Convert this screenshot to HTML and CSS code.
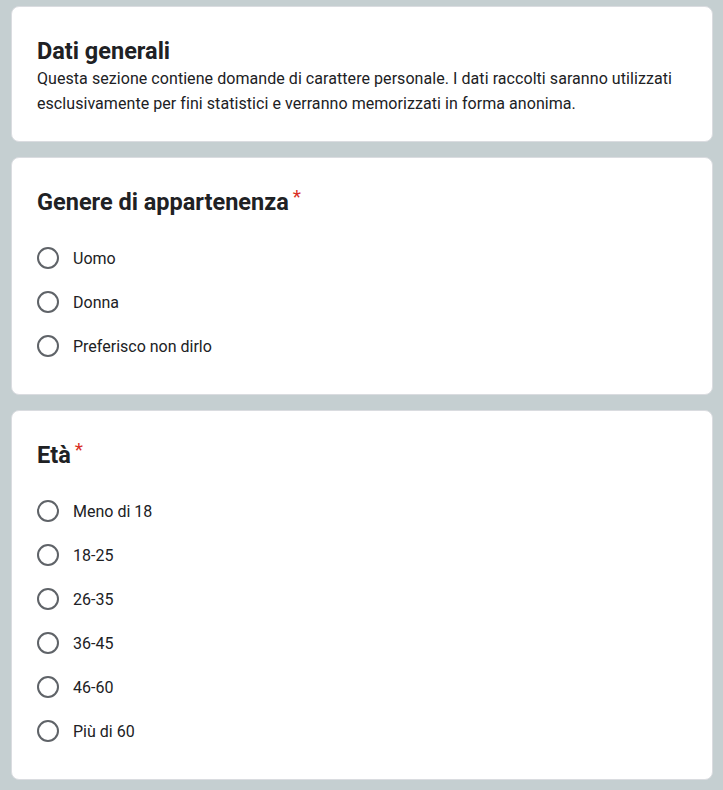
FILE: index.html
```html
<!DOCTYPE html>
<html lang="it">
<head>
<meta charset="utf-8">
<link rel="stylesheet" href="styles.css">
</head>
<body>
<main class="form">
  <section class="card intro">
    <h1 class="intro-title">Dati generali</h1>
    <p class="intro-desc">Questa sezione contiene domande di carattere personale. I dati raccolti saranno utilizzati esclusivamente per fini statistici e verranno memorizzati in forma anonima.</p>
  </section>

  <section class="card question">
    <h2 class="q-title">Genere di appartenenza<span class="req">*</span></h2>
    <ul class="options">
      <li class="option"><span class="radio"></span><span class="label">Uomo</span></li>
      <li class="option"><span class="radio"></span><span class="label">Donna</span></li>
      <li class="option"><span class="radio"></span><span class="label">Preferisco non dirlo</span></li>
    </ul>
  </section>

  <section class="card question">
    <h2 class="q-title">Età<span class="req">*</span></h2>
    <ul class="options">
      <li class="option"><span class="radio"></span><span class="label">Meno di 18</span></li>
      <li class="option"><span class="radio"></span><span class="label">18-25</span></li>
      <li class="option"><span class="radio"></span><span class="label">26-35</span></li>
      <li class="option"><span class="radio"></span><span class="label">36-45</span></li>
      <li class="option"><span class="radio"></span><span class="label">46-60</span></li>
      <li class="option"><span class="radio"></span><span class="label">Più di 60</span></li>
    </ul>
  </section>
</main>
</body>
</html>
```

FILE: styles.css
```css
html, body {
  margin: 0;
  padding: 0;
  background: #c5cfd1;
}
body {
  font-family: Roboto, "Liberation Sans", Arial, sans-serif;
  color: #202124;
}
.form {
  display: flex;
  flex-direction: column;
  gap: 15px;
  padding: 6px 10px 10px 11px;
}
.card {
  background: #ffffff;
  border: 1px solid #dadce0;
  border-radius: 8px;
}
.intro {
  padding: 30px 24px 25px 25px;
}
.intro-title {
  margin: 0;
  font-size: 23.5px;
  font-weight: 700;
  line-height: 28px;
}
.intro-desc {
  margin: 1px 0 0;
  font-size: 16px;
  line-height: 25px;
  letter-spacing: 0.06px;
}
.question {
  padding: 32px 24px 26px 25px;
}
.q-title {
  margin: 0;
  font-size: 23.5px;
  font-weight: 700;
  line-height: 24px;
}
.req {
  color: #d93025;
  font-size: 19px;
  font-weight: 400;
  margin-left: 4px;
  vertical-align: top;
  position: relative;
  top: -5px;
}
.options {
  list-style: none;
  margin: 22px 0 0;
  padding: 0;
}
.option {
  display: flex;
  align-items: center;
  height: 44px;
}
.radio {
  box-sizing: border-box;
  width: 22px;
  height: 22px;
  border: 2px solid #5f6368;
  border-radius: 50%;
  margin-right: 14px;
  flex: none;
}
.label {
  font-size: 16px;
  color: #202124;
}
```
